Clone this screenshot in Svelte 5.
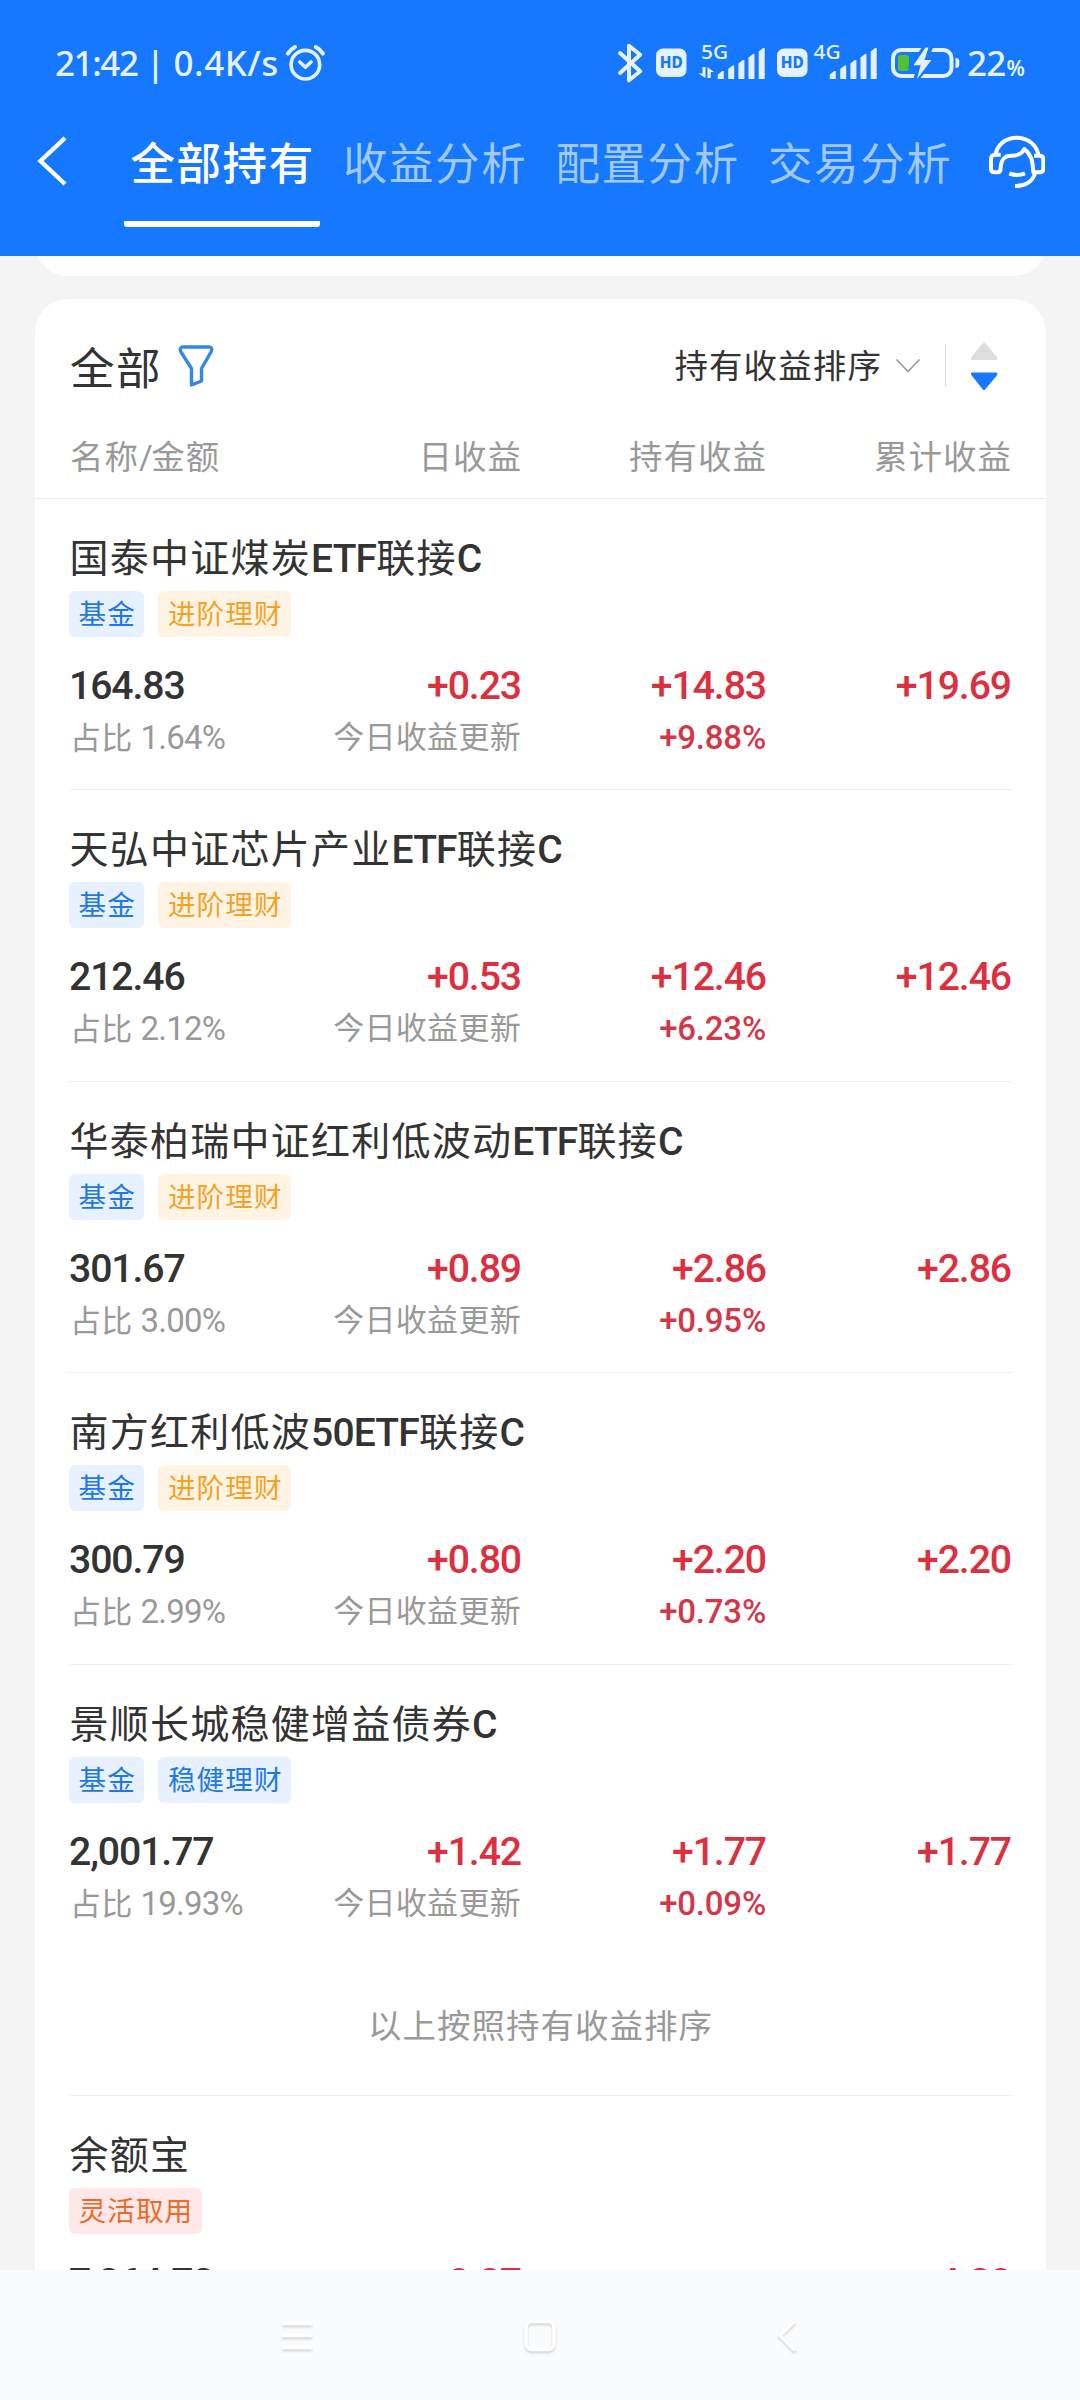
<script>
  const tabs = ['全部持有', '收益分析', '配置分析', '交易分析'];

  // `name` is split so CJK and Latin runs can be tracked separately.
  const holdings = [
    { name: ['国泰中证煤炭', 'ETF', '联接', 'C'], tag: '进阶理财', tone: 'amber', amount: '164.83', share: '1.64%', day: '+0.23', hold: '+14.83', rate: '+9.88%', total: '+19.69' },
    { name: ['天弘中证芯片产业', 'ETF', '联接', 'C'], tag: '进阶理财', tone: 'amber', amount: '212.46', share: '2.12%', day: '+0.53', hold: '+12.46', rate: '+6.23%', total: '+12.46' },
    { name: ['华泰柏瑞中证红利低波动', 'ETF', '联接', 'C'], tag: '进阶理财', tone: 'amber', amount: '301.67', share: '3.00%', day: '+0.89', hold: '+2.86', rate: '+0.95%', total: '+2.86' },
    { name: ['南方红利低波', '50ETF', '联接', 'C'], tag: '进阶理财', tone: 'amber', amount: '300.79', share: '2.99%', day: '+0.80', hold: '+2.20', rate: '+0.73%', total: '+2.20' },
    { name: ['景顺长城稳健增益债券', 'C'], tag: '稳健理财', tone: 'blue', amount: '2,001.77', share: '19.93%', day: '+1.42', hold: '+1.77', rate: '+0.09%', total: '+1.77' },
  ];

  const bars = [
    [0, 71],
    [10.4, 65.5],
    [20.6, 60],
    [30.7, 54],
    [40.9, 48],
  ];
  const barPath = (x0) =>
    bars.map(([dx, top]) => `M${x0 + dx} ${top + 3.5}L${x0 + dx + 4.5} ${top}H${x0 + dx + 6}V79H${x0 + dx}Z`).join('');
</script>

{#snippet hd(x)}
  <rect x={x} y="48.5" width="30.5" height="28.5" rx="7" fill="#e6f1ff" />
  <text x={x + 15.2} y="68.4" text-anchor="middle" font-size="16" font-weight="800" fill="#1677ff" textLength="23" lengthAdjust="spacingAndGlyphs">HD</text>
{/snippet}

<div class="screen">
  <header>
    <div class="status">
      <span class="clock"><span class="time">21:42</span> | 0.4K/s</span>
      <svg class="alarm" width="42" height="44" viewBox="284 42 42 44" fill="none" stroke="#e6f1ff" stroke-linecap="round">
        <circle cx="305.4" cy="64.7" r="14.3" stroke-width="3.6" />
        <path d="M299.8 62L305.4 67.2L311 62" stroke-width="3.6" stroke-linejoin="round" />
        <path d="M287.8 53.6Q290.5 49.3 295 47M323 53.6Q320.3 49.3 315.8 47" stroke-width="4" />
      </svg>

      <div class="indicators">
        <svg width="36" height="44" viewBox="614 41 36 44" fill="none" stroke="#e6f1ff" stroke-width="4" stroke-linecap="round" stroke-linejoin="round">
          <path d="M620 53L640.2 71.3L629 80.3V45.7L640.2 54.7L620 73" />
        </svg>
        <svg width="42" height="44" viewBox="650 41 42 44">{@render hd(656)}</svg>
        <svg width="80" height="64" viewBox="692 31 80 64" fill="#e6f1ff">
          <text x="701" y="59" font-size="20" font-weight="500" textLength="27" lengthAdjust="spacingAndGlyphs">5G</text>
          <path d="M702.5 67H705.5V78L698.5 73.5H702.5ZM707.5 67L714 72H710.8V78H707.5Z" />
          <path d={barPath(717.8)} />
        </svg>
        <svg width="39" height="44" viewBox="772 41 39 44">{@render hd(777)}</svg>
        <svg width="74" height="64" viewBox="811 31 74 64" fill="#e6f1ff">
          <text x="813.5" y="59" font-size="20" font-weight="500" textLength="27" lengthAdjust="spacingAndGlyphs">4G</text>
          <path d={barPath(829.8)} />
        </svg>
        <svg width="79" height="44" viewBox="885 41 79 44">
          <rect x="893" y="50" width="58.5" height="26" rx="8" fill="none" stroke="#e6f1ff" stroke-width="4" />
          <rect x="898" y="55" width="11" height="16" rx="2.5" fill="#52c030" />
          <path d="M955.5 58Q959.3 58 959.3 61V65Q959.3 68 955.5 68Z" fill="#e6f1ff" />
          <path d="M926 46L912 65.8H920L915.5 80L933 59.4H925.5L931 46Z" fill="#e6f1ff" stroke="#1677ff" stroke-width="5" />
          <path d="M925.5 47.5L913.5 65.2H920.6L917 79L931.5 60H924.5L928.5 47.5Z" fill="#e6f1ff" />
        </svg>
        <span class="charge">22<small>%</small></span>
      </div>
    </div>

    <nav class="tabs">
      <svg class="back" width="36" height="60" viewBox="34 131 36 60" fill="none" stroke="#fff" stroke-width="4.4">
        <path d="M65 138L40.5 161L65 184" />
      </svg>
      {#each tabs as tab, i}
        <span class="tab" class:active={i === 0}>{tab}</span>
      {/each}
      <svg class="service" width="60" height="60" viewBox="45 30 180 180" fill="none" stroke="#fff" stroke-width="12" stroke-linejoin="round">
        <path d="M76 108C80 75 106 53 140 53C174 53 201 75 206 108" />
        <path d="M92 104H73Q63 107 63 118V146Q63 157 74 157H82Q92 157 92 143C94 116 104 106 126 107C146 107 155 101 163 87C184 104 188 122 190 157H207Q220 157 220 146V118Q220 107 208 107H192" />
        <path d="M196 157C190 182 168 198 135 198" />
        <path d="M118 160Q141 170 165 160" />
      </svg>
    </nav>
  </header>

  <main>
    <section class="card previous"></section>
    <section class="card">
      <div class="toolbar">
        <span class="all">全部</span>
        <svg class="funnel" width="38" height="46" viewBox="177 344 38 46" fill="none" stroke="#3585ea" stroke-width="3.4" stroke-linejoin="round">
          <path d="M182 348H210Q213 349 211 353L201.500 369.500V382L191.500 386V369.500L181 353Q179 349 182 348Z" />
        </svg>
        <span class="order">持有收益排序</span>
        <svg class="chevron" width="26" height="18" viewBox="895 356 26 18" fill="none" stroke="#999" stroke-width="1.6">
          <path d="M896.500 359.500L908 371.500L919.500 359.500" />
        </svg>
        <i class="rule"></i>
        <svg class="arrows" width="28" height="50" viewBox="970.500 341 28 50" stroke-width="3" stroke-linejoin="round">
          <path d="M984.500 344L973 358.500H996.500Z" fill="#ddd" stroke="#ddd" />
          <path d="M984.500 388.500L973 374H996.500Z" fill="#1677ff" stroke="#1677ff" />
        </svg>
      </div>

      <div class="grid columns">
        <span>名称<span class="slash">/</span>金额</span><span>日收益</span><span>持有收益</span><span>累计收益</span>
      </div>

      {#each holdings as h, i}
        <article class:last={i === holdings.length - 1}>
          <h2>{#each h.name as part, k}{#if k % 2}<b>{part}</b>{:else}{part}{/if}{/each}</h2>
          <div class="tags"><span class="tag blue">基金</span><span class="tag {h.tone}">{h.tag}</span></div>
          <div class="grid figures">
            <span class="amount">{h.amount}</span><span>{h.day}</span><span>{h.hold}</span><span>{h.total}</span>
          </div>
          <div class="grid notes">
            <span>占比 <em>{h.share}</em></span><span>今日收益更新</span><span class="rate">{h.rate}</span>
          </div>
        </article>
      {/each}

      <p class="summary">以上按照持有收益排序</p>

      <article class="last">
        <h2>余额宝</h2>
        <div class="tags"><span class="tag coral">灵活取用</span></div>
        <div class="grid figures">
          <span class="amount">7,264.72</span><span>+0.27</span><span></span><span>+4.20</span>
        </div>
      </article>
    </section>
  </main>

  <footer>
    <svg width="40" height="46" viewBox="277 2314 40 46" fill="none" stroke="#fff" stroke-width="3.5">
      <path d="M282 2323.500H312M282 2335.500H312M282 2347.500H312" />
    </svg>
    <svg width="40" height="46" viewBox="520 2314 40 46" fill="none" stroke="#fff" stroke-width="3.5">
      <rect x="526" y="2321.500" width="28" height="28" rx="6" />
    </svg>
    <svg width="40" height="46" viewBox="767 2314 40 46" fill="none" stroke="#fff" stroke-width="3.5">
      <path d="M795 2321L780 2335.500L795 2350.500" />
    </svg>
  </footer>
</div>

<style>
  :global(body) {
    background: #f4f4f4;
  }
  .screen {
    width: 1080px;
    height: 2400px;
    display: flex;
    flex-direction: column;
    overflow: hidden;
    background: #f4f4f4;
    color: #333;
    font-family: Roboto, 'Noto Sans CJK SC', sans-serif;
  }
  svg {
    display: block;
    flex: none;
  }
  header {
    flex: none;
    height: 256px;
    background: #1677ff;
  }
  .status {
    height: 126px;
    box-sizing: border-box;
    padding: 0 0 0 55px;
    display: flex;
    align-items: center;
    color: #e6f1ff;
    font-family: 'Noto Sans', sans-serif;
    font-weight: 500;
    white-space: nowrap;
  }
  .clock {
    width: 229px;
    font-size: 35px;
    letter-spacing: 0.5px;
    word-spacing: -1.5px;
    margin-top: -2px;
  }
  .time {
    letter-spacing: -1.4px;
  }
  .alarm {
    margin-top: 2px;
  }
  .indicators {
    margin-left: 288px;
    display: flex;
    align-items: center;
  }
  .charge {
    margin: -2px 0 0 3px;
    font-size: 35px;
    letter-spacing: -0.8px;
  }
  .charge small {
    font-size: 21px;
    margin-left: 1px;
    font-weight: 600;
  }
  .tabs {
    height: 101px;
    display: flex;
    align-items: flex-start;
  }
  .back {
    margin: 5px 54px 0 34px;
  }
  .tab {
    height: 101px;
    line-height: 78px;
    width: 196px;
    margin-right: 16.5px;
    box-sizing: border-box;
    text-align: center;
    font-size: 44.5px;
    letter-spacing: 1.6px;
    text-indent: 1.2px;
    white-space: nowrap;
    color: #a1c9ff;
    flex: none;
  }
  .tab.active {
    color: #fff;
    font-weight: 500;
    background: linear-gradient(#fff, #fff) bottom / 100% 6px no-repeat;
    clip-path: inset(0 round 3px);
  }
  .service {
    margin: 4px 0 0 11px;
  }
  main {
    flex: none;
    height: 2014px;
    overflow: hidden;
    padding: 0 34px 0 35px;
    display: flex;
    flex-direction: column;
  }
  .card {
    flex: none;
    background: #fff;
    border-radius: 33px;
  }
  .previous {
    height: 80px;
    margin: -60px 0 23px;
  }
  .toolbar {
    height: 124px;
    padding: 14px 13px 0 35px;
    margin-right: 34px;
    box-sizing: border-box;
    display: flex;
    align-items: center;
  }
  .all {
    font-size: 44.5px;
    letter-spacing: 1.6px;
    width: 107px;
    white-space: nowrap;
    margin-top: -6px;
  }
  .funnel {
    margin-top: -4px;
  }
  .order {
    margin-left: auto;
    margin-top: -9px;
    font-size: 33.5px;
    letter-spacing: 1.1px;
    white-space: nowrap;
  }
  .chevron {
    margin: -7px 24px 0 13px;
  }
  .rule {
    width: 1px;
    height: 42px;
    margin-right: 24px;
    margin-top: -4px;
    background: #ddd;
  }
  .arrows {
    margin: -5px 1px 0 0;
  }
  .grid {
    display: grid;
    grid-template-columns: 207px 245px 245px 245px;
    white-space: nowrap;
    text-align: right;
  }
  .grid > :first-child {
    text-align: left;
  }
  .columns {
    height: 76px;
    box-sizing: border-box;
    line-height: 69px;
    padding-left: 35px;
    border-bottom: 1px solid #eee;
    font-size: 33.5px;
    letter-spacing: 1px;
    color: #999;
  }
  .slash {
    letter-spacing: -1.5px;
  }
  article {
    height: 290.4px;
    margin: 0 34px;
    border-bottom: 1px solid #eee;
  }
  article.last {
    border-color: transparent;
  }
  h2 {
    margin: 0;
    padding: 28px 0 0 0.5px;
    height: 64px;
    line-height: 64px;
    font-size: 39px;
    font-weight: 400;
    letter-spacing: 1.25px;
    white-space: nowrap;
  }
  h2 b {
    font-weight: 500;
    letter-spacing: -0.8px;
  }
  .tags {
    display: flex;
    gap: 14px;
  }
  .tag {
    height: 46px;
    line-height: 47px;
    padding: 0 8.5px 0 9.5px;
    border-radius: 6px;
    font-size: 27.6px;
    letter-spacing: 1.1px;
    white-space: nowrap;
  }
  .blue {
    color: #1f78e6;
    background: #e7f1ff;
  }
  .amber {
    color: #f5a227;
    background: #fff3e3;
  }
  .coral {
    color: #ee6a25;
    background: #ffe7ea;
  }
  .figures {
    box-sizing: border-box;
    padding-top: 23px;
    height: 75px;
    line-height: 52px;
    font-size: 39.2px;
    font-weight: 500;
    letter-spacing: -1.1px;
    color: #dc3040;
  }
  .amount {
    color: #333;
    letter-spacing: -1.1px;
  }
  .notes {
    height: 50px;
    line-height: 51px;
    font-size: 31px;
    letter-spacing: 0.3px;
    color: #999;
  }
  .notes > :first-child {
    padding-left: 1px;
  }
  .notes em {
    font-style: normal;
    font-size: 33px;
    letter-spacing: -0.8px;
  }
  .notes .rate {
    font-size: 33px;
    font-weight: 500;
    letter-spacing: -0.2px;
    color: #d2384a;
  }
  .summary {
    margin: 0 34px;
    height: 140px;
    box-sizing: border-box;
    padding-top: 46px;
    line-height: 50px;
    border-bottom: 1px solid #eee;
    text-align: center;
    font-size: 33.5px;
    letter-spacing: 1px;
    color: #999;
  }
  footer {
    flex: none;
    height: 130px;
    box-sizing: border-box;
    padding: 44px 0 0 277px;
    display: flex;
    align-items: flex-start;
    background: #fafbfd;
  }
  footer svg {
    margin-right: 203px;
    filter: drop-shadow(0 2.5px 1px #d4d4d4);
  }
  footer svg:nth-child(2) {
    margin-right: 207px;
  }
</style>
